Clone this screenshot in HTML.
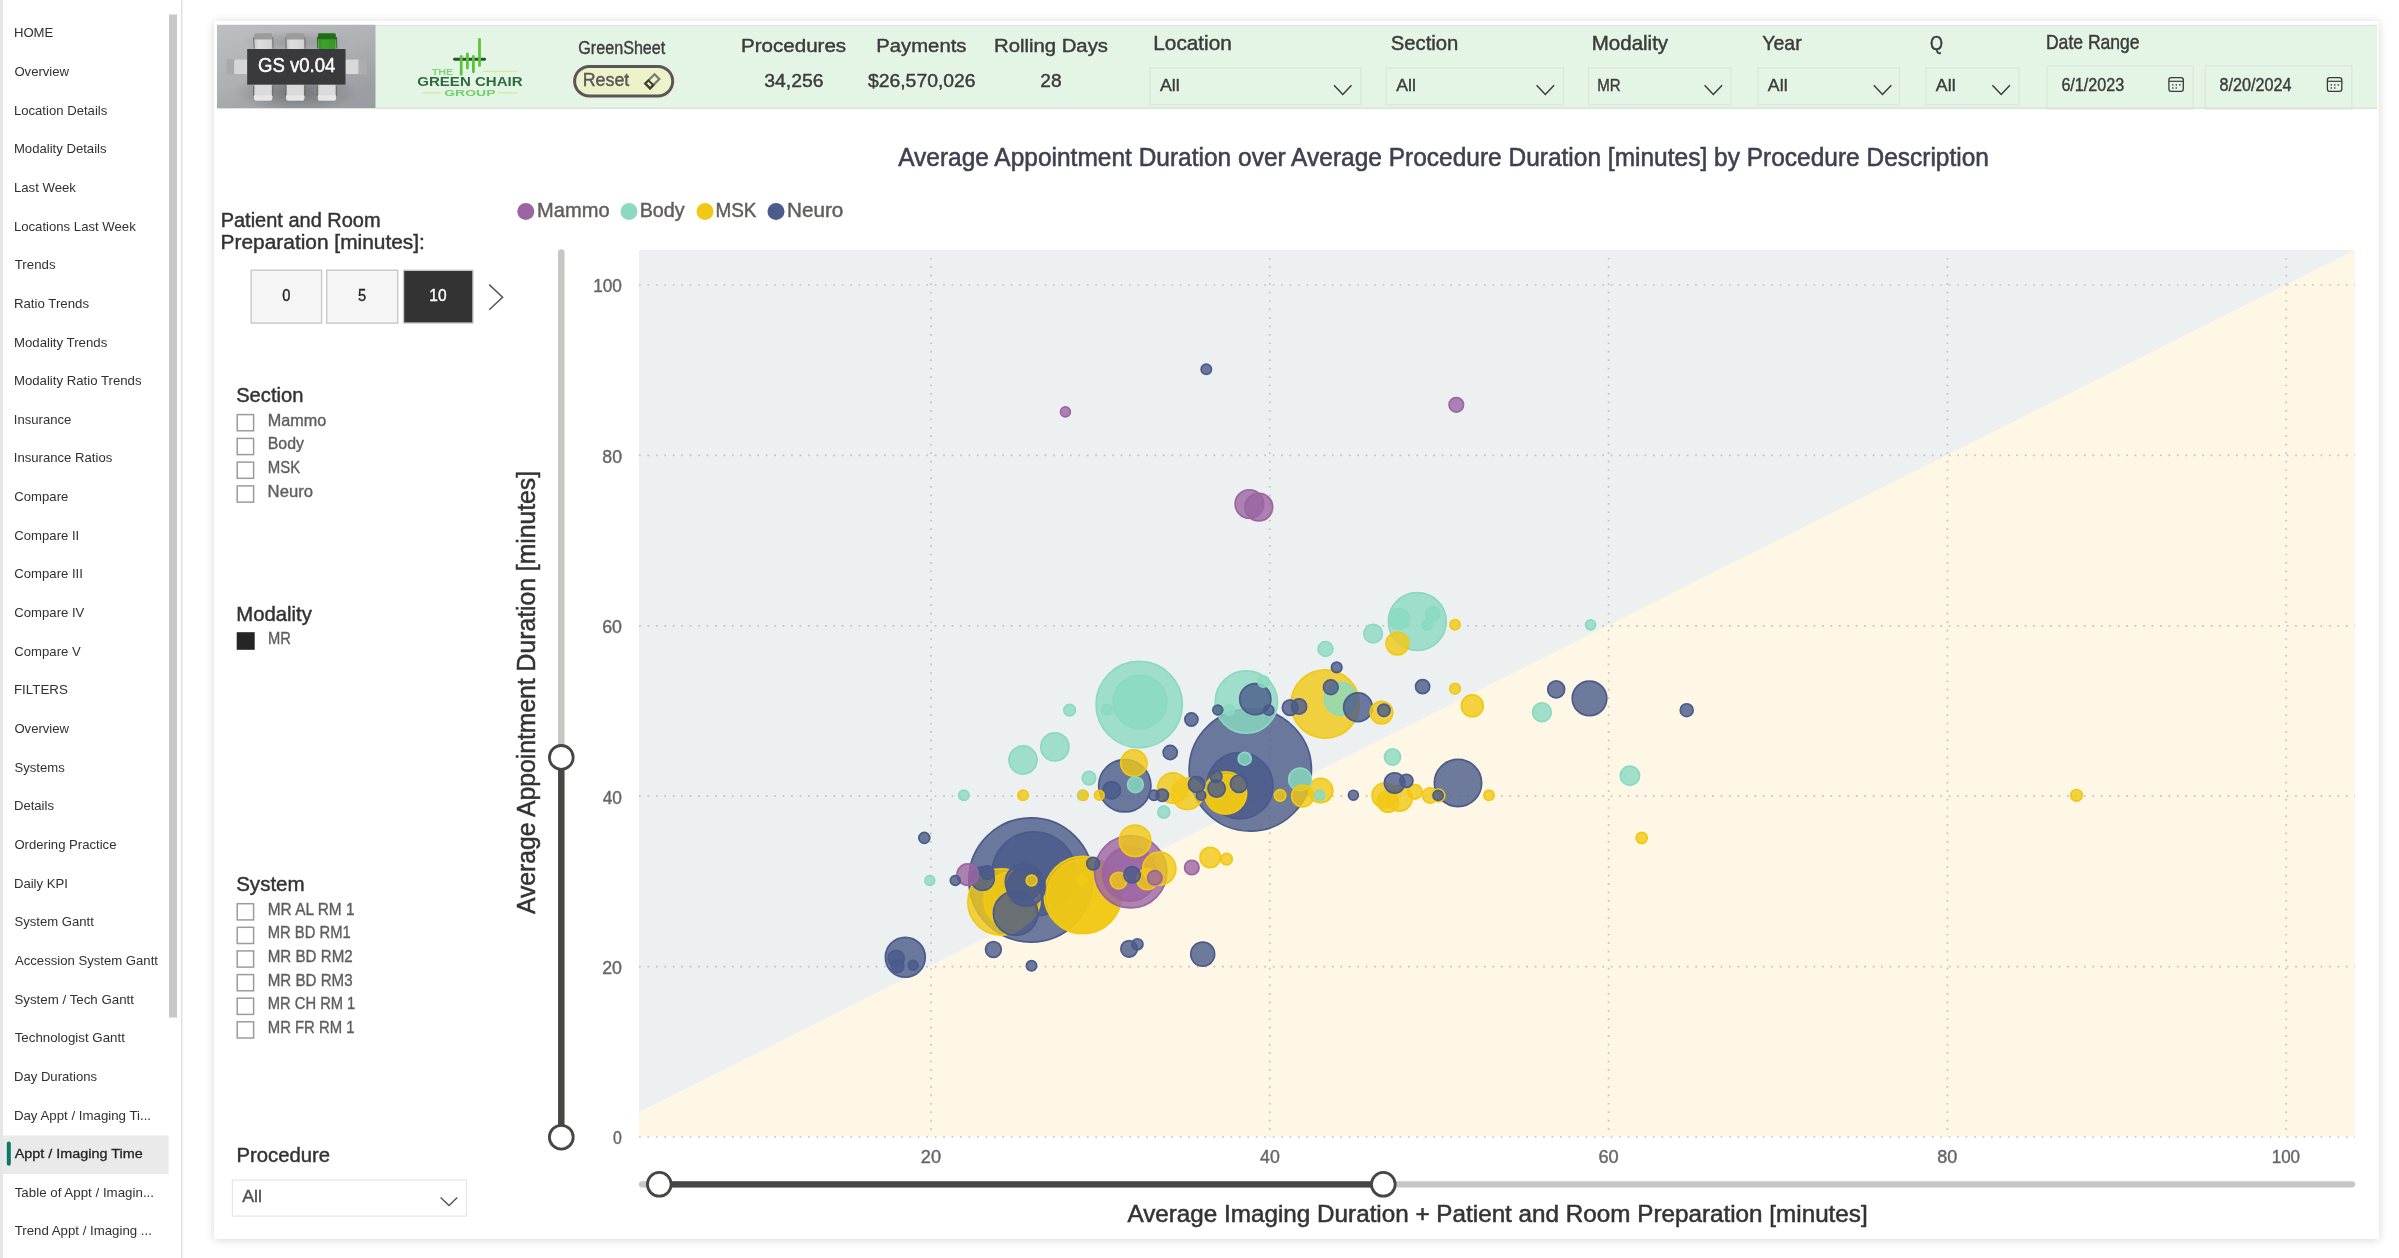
<!DOCTYPE html><html><head><meta charset="utf-8"><title>Appt / Imaging Time</title><style>html,body{margin:0;padding:0;background:#fff;overflow:hidden;width:2399px;height:1258px}#card{position:absolute;left:214px;top:21px;width:2165px;height:1218px;background:#fff;box-shadow:0 1px 9px rgba(0,0,0,0.16)}svg{position:absolute;left:0;top:0;display:block;will-change:transform}text{font-family:"Liberation Sans",sans-serif}</style></head><body>
<div id="card"></div>
<svg width="2399" height="1258" viewBox="0 0 2399 1258">
<rect x="0.00" y="0.00" width="3.00" height="1258.00" fill="#E6E6E6"/>
<rect x="181.00" y="0.00" width="1.50" height="1258.00" fill="#E1E1E1"/>
<rect x="169.00" y="14.50" width="8.00" height="1003.00" fill="#C8C8C8"/>
<rect x="3.00" y="1135.40" width="165.60" height="38.60" fill="#EAEAEA"/>
<rect x="6.80" y="1141.50" width="4.00" height="24.20" fill="#117865" rx="2"/>
<text x="13.92" y="37.30" font-size="13.60" fill="#323130" textLength="39.37" lengthAdjust="spacingAndGlyphs">HOME</text>
<text x="14.38" y="75.95" font-size="13.60" fill="#323130" textLength="54.69" lengthAdjust="spacingAndGlyphs">Overview</text>
<text x="13.92" y="114.60" font-size="13.60" fill="#323130" textLength="93.38" lengthAdjust="spacingAndGlyphs">Location Details</text>
<text x="13.92" y="153.25" font-size="13.60" fill="#323130" textLength="92.63" lengthAdjust="spacingAndGlyphs">Modality Details</text>
<text x="13.92" y="191.90" font-size="13.60" fill="#323130" textLength="62.00" lengthAdjust="spacingAndGlyphs">Last Week</text>
<text x="13.92" y="230.55" font-size="13.60" fill="#323130" textLength="121.83" lengthAdjust="spacingAndGlyphs">Locations Last Week</text>
<text x="14.71" y="269.20" font-size="13.60" fill="#323130" textLength="40.85" lengthAdjust="spacingAndGlyphs">Trends</text>
<text x="13.92" y="307.85" font-size="13.60" fill="#323130" textLength="75.13" lengthAdjust="spacingAndGlyphs">Ratio Trends</text>
<text x="13.92" y="346.50" font-size="13.60" fill="#323130" textLength="93.36" lengthAdjust="spacingAndGlyphs">Modality Trends</text>
<text x="13.92" y="385.15" font-size="13.60" fill="#323130" textLength="127.64" lengthAdjust="spacingAndGlyphs">Modality Ratio Trends</text>
<text x="13.79" y="423.80" font-size="13.60" fill="#323130" textLength="57.64" lengthAdjust="spacingAndGlyphs">Insurance</text>
<text x="13.79" y="462.45" font-size="13.60" fill="#323130" textLength="98.48" lengthAdjust="spacingAndGlyphs">Insurance Ratios</text>
<text x="14.33" y="501.10" font-size="13.60" fill="#323130" textLength="53.98" lengthAdjust="spacingAndGlyphs">Compare</text>
<text x="14.33" y="539.75" font-size="13.60" fill="#323130" textLength="64.92" lengthAdjust="spacingAndGlyphs">Compare II</text>
<text x="14.33" y="578.40" font-size="13.60" fill="#323130" textLength="68.56" lengthAdjust="spacingAndGlyphs">Compare III</text>
<text x="14.33" y="617.05" font-size="13.60" fill="#323130" textLength="70.02" lengthAdjust="spacingAndGlyphs">Compare IV</text>
<text x="14.33" y="655.70" font-size="13.60" fill="#323130" textLength="66.38" lengthAdjust="spacingAndGlyphs">Compare V</text>
<text x="13.92" y="694.35" font-size="13.60" fill="#323130" textLength="53.96" lengthAdjust="spacingAndGlyphs">FILTERS</text>
<text x="14.38" y="733.00" font-size="13.60" fill="#323130" textLength="54.69" lengthAdjust="spacingAndGlyphs">Overview</text>
<text x="14.40" y="771.65" font-size="13.60" fill="#323130" textLength="50.32" lengthAdjust="spacingAndGlyphs">Systems</text>
<text x="13.92" y="810.30" font-size="13.60" fill="#323130" textLength="40.12" lengthAdjust="spacingAndGlyphs">Details</text>
<text x="14.38" y="848.95" font-size="13.60" fill="#323130" textLength="102.11" lengthAdjust="spacingAndGlyphs">Ordering Practice</text>
<text x="13.92" y="887.60" font-size="13.60" fill="#323130" textLength="53.97" lengthAdjust="spacingAndGlyphs">Daily KPI</text>
<text x="14.40" y="926.25" font-size="13.60" fill="#323130" textLength="79.50" lengthAdjust="spacingAndGlyphs">System Gantt</text>
<text x="14.97" y="964.90" font-size="13.60" fill="#323130" textLength="142.96" lengthAdjust="spacingAndGlyphs">Accession System Gantt</text>
<text x="14.40" y="1003.55" font-size="13.60" fill="#323130" textLength="119.62" lengthAdjust="spacingAndGlyphs">System / Tech Gantt</text>
<text x="14.71" y="1042.20" font-size="13.60" fill="#323130" textLength="110.16" lengthAdjust="spacingAndGlyphs">Technologist Gantt</text>
<text x="13.92" y="1080.85" font-size="13.60" fill="#323130" textLength="83.15" lengthAdjust="spacingAndGlyphs">Day Durations</text>
<text x="13.92" y="1119.50" font-size="13.60" fill="#323130" textLength="137.13" lengthAdjust="spacingAndGlyphs">Day Appt / Imaging Ti...</text>
<text x="14.77" y="1158.15" font-size="13.60" fill="#252423" textLength="127.86" lengthAdjust="spacingAndGlyphs" stroke="#252423" stroke-width="0.3">Appt / Imaging Time</text>
<text x="14.71" y="1196.80" font-size="13.60" fill="#323130" textLength="139.33" lengthAdjust="spacingAndGlyphs">Table of Appt / Imagin...</text>
<text x="14.71" y="1235.45" font-size="13.60" fill="#323130" textLength="137.14" lengthAdjust="spacingAndGlyphs">Trend Appt / Imaging ...</text>
<rect x="217.00" y="25.00" width="2160.50" height="83.00" fill="#E5F5E5"/>
<rect x="217.00" y="25.00" width="2160.50" height="1.00" fill="#DDE6DD"/>
<rect x="217.00" y="107.50" width="2160.50" height="1.30" fill="#D8DCD8"/>
<defs><linearGradient id="imgbg" x1="0" y1="0" x2="0.6" y2="1"><stop offset="0" stop-color="#BDBFC2"/><stop offset="0.55" stop-color="#AEB0B4"/><stop offset="1" stop-color="#9A9DA1"/></linearGradient><radialGradient id="shad" cx="0.5" cy="0.5" r="0.5"><stop offset="0" stop-color="#5E6166" stop-opacity="0.75"/><stop offset="1" stop-color="#5E6166" stop-opacity="0"/></radialGradient><linearGradient id="seatT" x1="0" y1="0" x2="1" y2="0"><stop offset="0" stop-color="#C9C9C9"/><stop offset="0.25" stop-color="#DEDEDE"/><stop offset="1" stop-color="#D2D2D2"/></linearGradient><linearGradient id="seatG" x1="0" y1="0" x2="1" y2="0"><stop offset="0" stop-color="#2F8E22"/><stop offset="0.3" stop-color="#3DA42B"/><stop offset="1" stop-color="#349725"/></linearGradient><clipPath id="imgclip"><rect x="217" y="24.5" width="158.7" height="83.5"/></clipPath></defs>
<g clip-path="url(#imgclip)">
<rect x="217.00" y="24.50" width="158.70" height="83.50" fill="url(#imgbg)"/>
<ellipse cx="296" cy="92" rx="62" ry="20" fill="url(#shad)"/>
<ellipse cx="296" cy="42" rx="55" ry="12" fill="url(#shad)" opacity="0.45"/>
<path d="M253.9 39.8 L254.4 34.6 Q254.6 33.2 255.6 33.2 L270.8 33.2 Q271.8 33.2 272.0 34.6 L272.5 39.8 Z" fill="#9B9B9B"/>
<path d="M254.6 39.6 L255.2 49 L271.8 49 L272.0 39.6 Z" fill="url(#seatT)"/>
<line x1="253.6" y1="37" x2="254.0" y2="48.5" stroke="#707070" stroke-width="0.9"/>
<line x1="272.8" y1="37" x2="273.1" y2="48.5" stroke="#707070" stroke-width="0.9"/>
<path d="M254.6 84.6 L254.6 95 Q253.6 100.6 255.6 100.6 L270.8 100.6 Q272.8 100.6 271.8 95 L271.8 84.6 Z" fill="#DADADA"/>
<path d="M254.0 95.2 L272.4 95.2 Q272.6 100.6 270.6 100.6 L255.8 100.6 Q253.8 100.6 254.0 95.2 Z" fill="#E6E6E6"/>
<line x1="253.5" y1="86" x2="253.5" y2="96" stroke="#6A6A6A" stroke-width="0.9"/>
<line x1="272.9" y1="86" x2="272.9" y2="96" stroke="#6A6A6A" stroke-width="0.9"/>
<path d="M286.0 39.8 L286.5 34.6 Q286.7 33.2 287.7 33.2 L302.9 33.2 Q303.9 33.2 304.1 34.6 L304.6 39.8 Z" fill="#9B9B9B"/>
<path d="M286.7 39.6 L287.3 49 L303.9 49 L304.1 39.6 Z" fill="url(#seatT)"/>
<line x1="285.7" y1="37" x2="286.1" y2="48.5" stroke="#707070" stroke-width="0.9"/>
<line x1="304.9" y1="37" x2="305.2" y2="48.5" stroke="#707070" stroke-width="0.9"/>
<path d="M286.7 84.6 L286.7 95 Q285.7 100.6 287.7 100.6 L302.9 100.6 Q304.9 100.6 303.9 95 L303.9 84.6 Z" fill="#DADADA"/>
<path d="M286.1 95.2 L304.5 95.2 Q304.7 100.6 302.7 100.6 L287.9 100.6 Q285.9 100.6 286.1 95.2 Z" fill="#E6E6E6"/>
<line x1="285.6" y1="86" x2="285.6" y2="96" stroke="#6A6A6A" stroke-width="0.9"/>
<line x1="305.0" y1="86" x2="305.0" y2="96" stroke="#6A6A6A" stroke-width="0.9"/>
<path d="M317.6 39.8 L318.1 34.6 Q318.3 33.2 319.3 33.2 L334.5 33.2 Q335.5 33.2 335.7 34.6 L336.2 39.8 Z" fill="#1F6D17"/>
<path d="M318.3 39.6 L318.9 49 L335.5 49 L335.7 39.6 Z" fill="url(#seatG)"/>
<line x1="317.3" y1="37" x2="317.7" y2="48.5" stroke="#2A5A22" stroke-width="0.9"/>
<line x1="336.5" y1="37" x2="336.8" y2="48.5" stroke="#2A5A22" stroke-width="0.9"/>
<path d="M318.3 84.6 L318.3 95 Q317.3 100.6 319.3 100.6 L334.5 100.6 Q336.5 100.6 335.5 95 L335.5 84.6 Z" fill="#DADADA"/>
<path d="M317.7 95.2 L336.1 95.2 Q336.3 100.6 334.3 100.6 L319.5 100.6 Q317.5 100.6 317.7 95.2 Z" fill="#E6E6E6"/>
<line x1="317.2" y1="86" x2="317.2" y2="96" stroke="#6A6A6A" stroke-width="0.9"/>
<line x1="336.6" y1="86" x2="336.6" y2="96" stroke="#6A6A6A" stroke-width="0.9"/>
<rect x="226.5" y="59.2" width="8" height="15" rx="1.2" fill="#A9A9A9"/><rect x="234.2" y="59.6" width="13" height="14.4" fill="#D6D6D6"/>
<rect x="345.5" y="59.6" width="13.3" height="14.4" fill="#D8D8D8"/><rect x="358.5" y="59.2" width="8.3" height="15" rx="1.2" fill="#ADADAD"/>
<rect x="247.20" y="49.00" width="98.30" height="35.60" fill="#3A393B"/>
</g>
<text x="257.97" y="71.80" font-size="20.79" fill="#FFFFFF" textLength="77.38" lengthAdjust="spacingAndGlyphs" stroke="#FFFFFF" stroke-width="0.46">GS v0.04</text>
<g stroke-linecap="round">
<line x1="454.5" y1="59.3" x2="484.6" y2="59.3" stroke="#1E5A2E" stroke-width="2.9"/>
<line x1="461.2" y1="56.5" x2="461.2" y2="74.3" stroke="#5CC43A" stroke-width="2.8"/>
<line x1="467.4" y1="54.0" x2="467.4" y2="68.0" stroke="#5CC43A" stroke-width="2.8"/>
<line x1="473.4" y1="56.5" x2="473.4" y2="71.8" stroke="#5CC43A" stroke-width="2.8"/>
<line x1="479.5" y1="39.4" x2="479.5" y2="65.4" stroke="#5CC43A" stroke-width="2.8"/>
</g>
<text x="431.68" y="74.90" font-size="8.29" fill="#7FD67A" textLength="21.54" lengthAdjust="spacingAndGlyphs" font-weight="bold">THE</text>
<rect x="482.60" y="70.60" width="34.40" height="1.50" fill="#CFEFA8"/>
<text x="417.18" y="86.30" font-size="12.35" fill="#2D6A3C" textLength="105.53" lengthAdjust="spacingAndGlyphs" font-weight="bold">GREEN CHAIR</text>
<text x="444.23" y="95.60" font-size="9.30" fill="#6FD06C" textLength="51.25" lengthAdjust="spacingAndGlyphs" font-weight="bold">GROUP</text>
<rect x="422.00" y="92.20" width="19.30" height="1.40" fill="#CFEFA8"/>
<rect x="498.00" y="92.20" width="19.30" height="1.40" fill="#CFEFA8"/>
<text x="578.29" y="53.90" font-size="17.44" fill="#3E3E3E" textLength="87.03" lengthAdjust="spacingAndGlyphs" stroke="#3E3E3E" stroke-width="0.38">GreenSheet</text>
<rect x="574.6" y="66.4" width="98.1" height="29.5" rx="14.75" fill="#EEF2CB" stroke="#5A5657" stroke-width="3"/>
<text x="582.74" y="86.00" font-size="18.60" fill="#5A5657" textLength="46.59" lengthAdjust="spacingAndGlyphs" stroke="#5A5657" stroke-width="0.41">Reset</text>
<g transform="translate(652.3 81.35) rotate(-45)"><rect x="-6.6" y="-3.4" width="13.2" height="6.8" fill="none" stroke="#7A7C66" stroke-width="2.2"/><rect x="-6.6" y="-3.4" width="4.6" height="6.8" fill="none" stroke="#3D3F2F" stroke-width="2.1"/></g>
<text x="741.01" y="51.60" font-size="18.90" fill="#3B3B3B" textLength="105.13" lengthAdjust="spacingAndGlyphs" stroke="#3B3B3B" stroke-width="0.42">Procedures</text>
<text x="876.34" y="51.60" font-size="18.90" fill="#3B3B3B" textLength="90.09" lengthAdjust="spacingAndGlyphs" stroke="#3B3B3B" stroke-width="0.42">Payments</text>
<text x="994.14" y="51.60" font-size="18.90" fill="#3B3B3B" textLength="113.80" lengthAdjust="spacingAndGlyphs" stroke="#3B3B3B" stroke-width="0.42">Rolling Days</text>
<text x="764.26" y="87.30" font-size="18.90" fill="#3B3B3B" textLength="59.29" lengthAdjust="spacingAndGlyphs" stroke="#3B3B3B" stroke-width="0.42">34,256</text>
<text x="867.99" y="87.30" font-size="18.90" fill="#3B3B3B" textLength="107.56" lengthAdjust="spacingAndGlyphs" stroke="#3B3B3B" stroke-width="0.42">$26,570,026</text>
<text x="1040.34" y="87.30" font-size="18.90" fill="#3B3B3B" textLength="21.29" lengthAdjust="spacingAndGlyphs" stroke="#3B3B3B" stroke-width="0.42">28</text>
<text x="1153.30" y="50.20" font-size="20.64" fill="#3B3B3B" textLength="78.55" lengthAdjust="spacingAndGlyphs" stroke="#3B3B3B" stroke-width="0.45">Location</text>
<rect x="1150.0" y="68" width="211.0" height="36.8" fill="none" stroke="#DDE5DD" stroke-width="1.2"/>
<text x="1159.97" y="90.50" font-size="15.99" fill="#3B3B3B" textLength="19.72" lengthAdjust="spacingAndGlyphs" stroke="#3B3B3B" stroke-width="0.35">All</text>
<polyline points="1334.0,85.2 1342.8,94.5 1351.5,85.2" fill="none" stroke="#3B3B3B" stroke-width="1.5"/>
<text x="1390.78" y="50.20" font-size="20.64" fill="#3B3B3B" textLength="67.64" lengthAdjust="spacingAndGlyphs" stroke="#3B3B3B" stroke-width="0.45">Section</text>
<rect x="1386.2" y="68" width="177.3" height="36.8" fill="none" stroke="#DDE5DD" stroke-width="1.2"/>
<text x="1396.17" y="90.50" font-size="15.99" fill="#3B3B3B" textLength="19.72" lengthAdjust="spacingAndGlyphs" stroke="#3B3B3B" stroke-width="0.35">All</text>
<polyline points="1536.6,85.2 1545.3,94.5 1554.1,85.2" fill="none" stroke="#3B3B3B" stroke-width="1.5"/>
<text x="1591.72" y="50.20" font-size="20.64" fill="#3B3B3B" textLength="76.42" lengthAdjust="spacingAndGlyphs" stroke="#3B3B3B" stroke-width="0.45">Modality</text>
<rect x="1588.5" y="68" width="142.5" height="36.8" fill="none" stroke="#DDE5DD" stroke-width="1.2"/>
<text x="1597.26" y="90.50" font-size="15.99" fill="#3B3B3B" textLength="23.44" lengthAdjust="spacingAndGlyphs" stroke="#3B3B3B" stroke-width="0.35">MR</text>
<polyline points="1704.6,85.2 1713.3,94.5 1722.1,85.2" fill="none" stroke="#3B3B3B" stroke-width="1.5"/>
<text x="1762.29" y="50.20" font-size="20.64" fill="#3B3B3B" textLength="39.42" lengthAdjust="spacingAndGlyphs" stroke="#3B3B3B" stroke-width="0.45">Year</text>
<rect x="1757.9" y="68" width="141.6" height="36.8" fill="none" stroke="#DDE5DD" stroke-width="1.2"/>
<text x="1767.87" y="90.50" font-size="15.99" fill="#3B3B3B" textLength="19.72" lengthAdjust="spacingAndGlyphs" stroke="#3B3B3B" stroke-width="0.35">All</text>
<polyline points="1873.8,85.2 1882.5,94.5 1891.3,85.2" fill="none" stroke="#3B3B3B" stroke-width="1.5"/>
<text x="1929.91" y="50.20" font-size="20.64" fill="#3B3B3B" textLength="12.99" lengthAdjust="spacingAndGlyphs" stroke="#3B3B3B" stroke-width="0.45">Q</text>
<rect x="1925.9" y="68" width="93.2" height="36.8" fill="none" stroke="#DDE5DD" stroke-width="1.2"/>
<text x="1935.87" y="90.50" font-size="15.99" fill="#3B3B3B" textLength="19.72" lengthAdjust="spacingAndGlyphs" stroke="#3B3B3B" stroke-width="0.35">All</text>
<polyline points="1992.4,85.2 2001.2,94.5 2009.9,85.2" fill="none" stroke="#3B3B3B" stroke-width="1.5"/>
<text x="2045.96" y="48.90" font-size="19.48" fill="#3B3B3B" textLength="93.62" lengthAdjust="spacingAndGlyphs" stroke="#3B3B3B" stroke-width="0.43">Date Range</text>
<rect x="2047.1" y="66" width="146.1" height="43" fill="none" stroke="#DDE5DD" stroke-width="1.2"/>
<text x="2061.38" y="91.10" font-size="18.17" fill="#3B3B3B" textLength="62.93" lengthAdjust="spacingAndGlyphs" stroke="#3B3B3B" stroke-width="0.40">6/1/2023</text>
<rect x="2168.9" y="77.7" width="14.4" height="13.6" rx="2.2" fill="none" stroke="#3B3B3B" stroke-width="1.3"/>
<line x1="2168.9" y1="81.3" x2="2183.3" y2="81.3" stroke="#3B3B3B" stroke-width="1.2"/>
<rect x="2172.10" y="84.20" width="1.40" height="1.40" fill="#3B3B3B"/>
<rect x="2172.10" y="87.30" width="1.40" height="1.40" fill="#3B3B3B"/>
<rect x="2175.60" y="84.20" width="1.40" height="1.40" fill="#3B3B3B"/>
<rect x="2175.60" y="87.30" width="1.40" height="1.40" fill="#3B3B3B"/>
<rect x="2179.10" y="84.20" width="1.40" height="1.40" fill="#3B3B3B"/>
<rect x="2205.2" y="66" width="146.7" height="43" fill="none" stroke="#DDE5DD" stroke-width="1.2"/>
<text x="2219.60" y="91.10" font-size="18.17" fill="#3B3B3B" textLength="71.88" lengthAdjust="spacingAndGlyphs" stroke="#3B3B3B" stroke-width="0.40">8/20/2024</text>
<rect x="2327.4" y="77.7" width="14.4" height="13.6" rx="2.2" fill="none" stroke="#3B3B3B" stroke-width="1.3"/>
<line x1="2327.4" y1="81.3" x2="2341.8" y2="81.3" stroke="#3B3B3B" stroke-width="1.2"/>
<rect x="2330.60" y="84.20" width="1.40" height="1.40" fill="#3B3B3B"/>
<rect x="2330.60" y="87.30" width="1.40" height="1.40" fill="#3B3B3B"/>
<rect x="2334.10" y="84.20" width="1.40" height="1.40" fill="#3B3B3B"/>
<rect x="2334.10" y="87.30" width="1.40" height="1.40" fill="#3B3B3B"/>
<rect x="2337.60" y="84.20" width="1.40" height="1.40" fill="#3B3B3B"/>
<text x="220.66" y="226.70" font-size="19.77" fill="#333333" textLength="159.96" lengthAdjust="spacingAndGlyphs" stroke="#333333" stroke-width="0.43">Patient and Room</text>
<text x="220.59" y="249.00" font-size="19.77" fill="#333333" textLength="204.32" lengthAdjust="spacingAndGlyphs" stroke="#333333" stroke-width="0.43">Preparation [minutes]:</text>
<rect x="251.1" y="270.2" width="70.5" height="52.9" fill="#F5F5F5" stroke="#C9C9C9" stroke-width="1.4"/>
<text x="282.26" y="300.70" font-size="16.72" fill="#252525" textLength="8.18" lengthAdjust="spacingAndGlyphs" stroke="#252525" stroke-width="0.37">0</text>
<rect x="326.7" y="270.2" width="71.0" height="52.9" fill="#F5F5F5" stroke="#C9C9C9" stroke-width="1.4"/>
<text x="358.12" y="300.70" font-size="16.72" fill="#252525" textLength="8.18" lengthAdjust="spacingAndGlyphs" stroke="#252525" stroke-width="0.37">5</text>
<rect x="403.5" y="270.2" width="69.5" height="52.9" fill="#333333" stroke="#CFCFCF" stroke-width="1.4"/>
<text x="429.32" y="300.70" font-size="16.72" fill="#FFFFFF" textLength="17.29" lengthAdjust="spacingAndGlyphs" stroke="#FFFFFF" stroke-width="0.37">10</text>
<polyline points="489.2,284.6 502.6,297.2 489.2,309.8" fill="none" stroke="#555555" stroke-width="1.5"/>
<text x="236.18" y="401.90" font-size="20.64" fill="#333333" textLength="67.22" lengthAdjust="spacingAndGlyphs" stroke="#333333" stroke-width="0.45">Section</text>
<rect x="237.2" y="414.6" width="16.4" height="16.2" fill="#FFFFFF" stroke="#9C9C9C" stroke-width="1.5"/>
<text x="267.67" y="425.70" font-size="16.28" fill="#5E5E5E" textLength="58.51" lengthAdjust="spacingAndGlyphs" stroke="#5E5E5E" stroke-width="0.36">Mammo</text>
<rect x="237.2" y="438.4" width="16.4" height="16.2" fill="#FFFFFF" stroke="#9C9C9C" stroke-width="1.5"/>
<text x="267.70" y="449.45" font-size="16.28" fill="#5E5E5E" textLength="36.24" lengthAdjust="spacingAndGlyphs" stroke="#5E5E5E" stroke-width="0.36">Body</text>
<rect x="237.2" y="462.1" width="16.4" height="16.2" fill="#FFFFFF" stroke="#9C9C9C" stroke-width="1.5"/>
<text x="267.77" y="473.20" font-size="16.28" fill="#5E5E5E" textLength="32.39" lengthAdjust="spacingAndGlyphs" stroke="#5E5E5E" stroke-width="0.36">MSK</text>
<rect x="237.2" y="485.9" width="16.4" height="16.2" fill="#FFFFFF" stroke="#9C9C9C" stroke-width="1.5"/>
<text x="267.63" y="496.95" font-size="16.28" fill="#5E5E5E" textLength="45.37" lengthAdjust="spacingAndGlyphs" stroke="#5E5E5E" stroke-width="0.36">Neuro</text>
<text x="236.23" y="620.80" font-size="20.93" fill="#333333" textLength="75.61" lengthAdjust="spacingAndGlyphs" stroke="#333333" stroke-width="0.46">Modality</text>
<rect x="236.70" y="632.20" width="18.00" height="17.60" fill="#252525"/>
<text x="267.89" y="643.90" font-size="15.99" fill="#5E5E5E" textLength="22.89" lengthAdjust="spacingAndGlyphs" stroke="#5E5E5E" stroke-width="0.35">MR</text>
<text x="236.17" y="890.80" font-size="20.64" fill="#333333" textLength="68.49" lengthAdjust="spacingAndGlyphs" stroke="#333333" stroke-width="0.45">System</text>
<rect x="237.2" y="903.7" width="16.4" height="16.2" fill="#FFFFFF" stroke="#9C9C9C" stroke-width="1.5"/>
<text x="267.76" y="914.80" font-size="16.42" fill="#5E5E5E" textLength="86.78" lengthAdjust="spacingAndGlyphs" stroke="#5E5E5E" stroke-width="0.36">MR AL RM 1</text>
<rect x="237.2" y="927.3" width="16.4" height="16.2" fill="#FFFFFF" stroke="#9C9C9C" stroke-width="1.5"/>
<text x="267.79" y="938.42" font-size="16.42" fill="#5E5E5E" textLength="82.93" lengthAdjust="spacingAndGlyphs" stroke="#5E5E5E" stroke-width="0.36">MR BD RM1</text>
<rect x="237.2" y="950.9" width="16.4" height="16.2" fill="#FFFFFF" stroke="#9C9C9C" stroke-width="1.5"/>
<text x="267.76" y="962.04" font-size="16.42" fill="#5E5E5E" textLength="84.90" lengthAdjust="spacingAndGlyphs" stroke="#5E5E5E" stroke-width="0.36">MR BD RM2</text>
<rect x="237.2" y="974.6" width="16.4" height="16.2" fill="#FFFFFF" stroke="#9C9C9C" stroke-width="1.5"/>
<text x="267.76" y="985.66" font-size="16.42" fill="#5E5E5E" textLength="84.80" lengthAdjust="spacingAndGlyphs" stroke="#5E5E5E" stroke-width="0.36">MR BD RM3</text>
<rect x="237.2" y="998.2" width="16.4" height="16.2" fill="#FFFFFF" stroke="#9C9C9C" stroke-width="1.5"/>
<text x="267.79" y="1009.28" font-size="16.42" fill="#5E5E5E" textLength="87.53" lengthAdjust="spacingAndGlyphs" stroke="#5E5E5E" stroke-width="0.36">MR CH RM 1</text>
<rect x="237.2" y="1021.8" width="16.4" height="16.2" fill="#FFFFFF" stroke="#9C9C9C" stroke-width="1.5"/>
<text x="267.78" y="1032.90" font-size="16.42" fill="#5E5E5E" textLength="86.75" lengthAdjust="spacingAndGlyphs" stroke="#5E5E5E" stroke-width="0.36">MR FR RM 1</text>
<text x="236.44" y="1161.70" font-size="20.93" fill="#333333" textLength="93.56" lengthAdjust="spacingAndGlyphs" stroke="#333333" stroke-width="0.46">Procedure</text>
<rect x="232.4" y="1180.1" width="234" height="36" fill="#FFFFFF" stroke="#E6E6E6" stroke-width="1.2"/>
<text x="242.16" y="1202.00" font-size="16.13" fill="#505050" textLength="19.93" lengthAdjust="spacingAndGlyphs" stroke="#505050" stroke-width="0.35">All</text>
<polyline points="440.6,1197.5 449,1205.6 457.3,1197.5" fill="none" stroke="#555555" stroke-width="1.4"/>
<text x="898.15" y="165.80" font-size="25.15" fill="#3F4150" textLength="1090.83" lengthAdjust="spacingAndGlyphs" stroke="#3F4150" stroke-width="0.55">Average Appointment Duration over Average Procedure Duration [minutes] by Procedure Description</text>
<circle cx="525.80" cy="211.40" r="8.50" fill="#9B64A2"/>
<text x="537.10" y="217.00" font-size="19.99" fill="#605E5C" textLength="72.49" lengthAdjust="spacingAndGlyphs" stroke="#605E5C" stroke-width="0.44">Mammo</text>
<circle cx="629.00" cy="211.40" r="8.50" fill="#8AD9C0"/>
<text x="639.63" y="217.00" font-size="19.99" fill="#605E5C" textLength="44.90" lengthAdjust="spacingAndGlyphs" stroke="#605E5C" stroke-width="0.44">Body</text>
<circle cx="705.00" cy="211.40" r="8.50" fill="#F1C814"/>
<text x="715.45" y="217.00" font-size="19.99" fill="#605E5C" textLength="41.02" lengthAdjust="spacingAndGlyphs" stroke="#605E5C" stroke-width="0.44">MSK</text>
<circle cx="776.00" cy="211.40" r="8.50" fill="#4B5B8C"/>
<text x="787.05" y="217.00" font-size="19.99" fill="#605E5C" textLength="56.31" lengthAdjust="spacingAndGlyphs" stroke="#605E5C" stroke-width="0.44">Neuro</text>
<rect x="639.00" y="250.00" width="1716.00" height="886.50" fill="#FEF7E5"/>
<polygon points="639.0,250.0 2355.0,250.0 639.0,1112.2" fill="#EDF0F1"/>
<line x1="639.0" y1="1137.00" x2="2355.0" y2="1137.00" stroke="#C2C2C2" stroke-width="1.7" stroke-dasharray="1.7,6.75"/>
<line x1="639.0" y1="966.60" x2="2355.0" y2="966.60" stroke="#C2C2C2" stroke-width="1.7" stroke-dasharray="1.7,6.75"/>
<line x1="639.0" y1="796.20" x2="2355.0" y2="796.20" stroke="#C2C2C2" stroke-width="1.7" stroke-dasharray="1.7,6.75"/>
<line x1="639.0" y1="625.80" x2="2355.0" y2="625.80" stroke="#C2C2C2" stroke-width="1.7" stroke-dasharray="1.7,6.75"/>
<line x1="639.0" y1="455.40" x2="2355.0" y2="455.40" stroke="#C2C2C2" stroke-width="1.7" stroke-dasharray="1.7,6.75"/>
<line x1="639.0" y1="285.00" x2="2355.0" y2="285.00" stroke="#C2C2C2" stroke-width="1.7" stroke-dasharray="1.7,6.75"/>
<line x1="931.00" y1="257.9" x2="931.00" y2="1137.0" stroke="#C2C2C2" stroke-width="1.7" stroke-dasharray="1.7,6.75"/>
<line x1="1269.80" y1="257.9" x2="1269.80" y2="1137.0" stroke="#C2C2C2" stroke-width="1.7" stroke-dasharray="1.7,6.75"/>
<line x1="1608.60" y1="257.9" x2="1608.60" y2="1137.0" stroke="#C2C2C2" stroke-width="1.7" stroke-dasharray="1.7,6.75"/>
<line x1="1947.40" y1="257.9" x2="1947.40" y2="1137.0" stroke="#C2C2C2" stroke-width="1.7" stroke-dasharray="1.7,6.75"/>
<line x1="2286.20" y1="257.9" x2="2286.20" y2="1137.0" stroke="#C2C2C2" stroke-width="1.7" stroke-dasharray="1.7,6.75"/>
<text x="613.08" y="1144.30" font-size="18.90" fill="#666666" textLength="8.84" lengthAdjust="spacingAndGlyphs" stroke="#666666" stroke-width="0.42">0</text>
<text x="602.21" y="973.90" font-size="18.90" fill="#666666" textLength="19.79" lengthAdjust="spacingAndGlyphs" stroke="#666666" stroke-width="0.42">20</text>
<text x="602.70" y="803.50" font-size="18.90" fill="#666666" textLength="19.27" lengthAdjust="spacingAndGlyphs" stroke="#666666" stroke-width="0.42">40</text>
<text x="602.20" y="633.10" font-size="18.90" fill="#666666" textLength="19.80" lengthAdjust="spacingAndGlyphs" stroke="#666666" stroke-width="0.42">60</text>
<text x="602.33" y="462.70" font-size="18.90" fill="#666666" textLength="19.66" lengthAdjust="spacingAndGlyphs" stroke="#666666" stroke-width="0.42">80</text>
<text x="593.19" y="292.30" font-size="18.90" fill="#666666" textLength="28.79" lengthAdjust="spacingAndGlyphs" stroke="#666666" stroke-width="0.42">100</text>
<text x="920.79" y="1163.20" font-size="18.31" fill="#666666" textLength="20.22" lengthAdjust="spacingAndGlyphs" stroke="#666666" stroke-width="0.40">20</text>
<text x="1260.09" y="1163.20" font-size="18.31" fill="#666666" textLength="19.70" lengthAdjust="spacingAndGlyphs" stroke="#666666" stroke-width="0.40">40</text>
<text x="1598.38" y="1163.20" font-size="18.31" fill="#666666" textLength="20.23" lengthAdjust="spacingAndGlyphs" stroke="#666666" stroke-width="0.40">60</text>
<text x="1937.32" y="1163.20" font-size="18.31" fill="#666666" textLength="20.09" lengthAdjust="spacingAndGlyphs" stroke="#666666" stroke-width="0.40">80</text>
<text x="2271.71" y="1163.20" font-size="18.31" fill="#666666" textLength="28.36" lengthAdjust="spacingAndGlyphs" stroke="#666666" stroke-width="0.40">100</text>
<g fill-opacity="0.8" stroke-width="1.7">
<circle cx="1031.0" cy="880.0" r="62.15" fill="#4A5A8A" stroke="#4A5A8A"/>
<circle cx="1250.3" cy="770.0" r="61.15" fill="#4A5A8A" stroke="#4A5A8A"/>
<circle cx="1065.0" cy="880.5" r="5.15" fill="#F1C814" stroke="#F1C814"/>
<circle cx="1082.3" cy="879.9" r="5.15" fill="#F1C814" stroke="#F1C814"/>
<circle cx="1139.2" cy="704.5" r="43.15" fill="#8AD9C0" stroke="#8AD9C0"/>
<circle cx="1034.0" cy="874.0" r="42.15" fill="#4A5A8A" stroke="#4A5A8A"/>
<circle cx="1082.8" cy="895.0" r="38.65" fill="#F1C814" stroke="#F1C814"/>
<circle cx="1084.0" cy="896.0" r="37.15" fill="#F1C814" stroke="#F1C814"/>
<circle cx="1130.7" cy="871.8" r="36.15" fill="#9B64A2" stroke="#9B64A2"/>
<circle cx="1325.2" cy="704.0" r="34.15" fill="#F1C814" stroke="#F1C814"/>
<circle cx="1001.0" cy="902.0" r="33.15" fill="#F1C814" stroke="#F1C814"/>
<circle cx="1239.8" cy="785.8" r="33.15" fill="#4A5A8A" stroke="#4A5A8A"/>
<circle cx="1246.3" cy="702.0" r="31.15" fill="#8AD9C0" stroke="#8AD9C0"/>
<circle cx="1417.3" cy="621.5" r="28.95" fill="#8AD9C0" stroke="#8AD9C0"/>
<circle cx="1012.0" cy="900.0" r="28.15" fill="#F1C814" stroke="#F1C814"/>
<circle cx="1129.8" cy="874.0" r="27.15" fill="#9B64A2" stroke="#9B64A2"/>
<circle cx="1140.0" cy="702.0" r="26.75" fill="#8AD9C0" stroke="#8AD9C0"/>
<circle cx="1124.8" cy="785.8" r="26.15" fill="#4A5A8A" stroke="#4A5A8A"/>
<circle cx="1458.0" cy="783.0" r="23.65" fill="#4A5A8A" stroke="#4A5A8A"/>
<circle cx="1015.6" cy="913.3" r="22.15" fill="#4A5A8A" stroke="#4A5A8A"/>
<circle cx="1225.5" cy="792.9" r="21.15" fill="#F1C814" stroke="#F1C814"/>
<circle cx="905.3" cy="957.3" r="19.95" fill="#4A5A8A" stroke="#4A5A8A"/>
<circle cx="1026.0" cy="887.0" r="19.15" fill="#4A5A8A" stroke="#4A5A8A"/>
<circle cx="1226.5" cy="794.0" r="19.15" fill="#F1C814" stroke="#F1C814"/>
<circle cx="1024.0" cy="882.0" r="18.65" fill="#4A5A8A" stroke="#4A5A8A"/>
<circle cx="1589.5" cy="698.4" r="17.25" fill="#4A5A8A" stroke="#4A5A8A"/>
<circle cx="1159.3" cy="868.7" r="16.55" fill="#F1C814" stroke="#F1C814"/>
<circle cx="1340.7" cy="698.8" r="16.25" fill="#8AD9C0" stroke="#8AD9C0"/>
<circle cx="1135.1" cy="840.8" r="15.75" fill="#F1C814" stroke="#F1C814"/>
<circle cx="1187.3" cy="793.8" r="15.75" fill="#F1C814" stroke="#F1C814"/>
<circle cx="1255.3" cy="699.2" r="15.55" fill="#4A5A8A" stroke="#4A5A8A"/>
<circle cx="1172.9" cy="788.0" r="15.15" fill="#F1C814" stroke="#F1C814"/>
<circle cx="1358.0" cy="707.2" r="14.35" fill="#4A5A8A" stroke="#4A5A8A"/>
<circle cx="1249.4" cy="504.0" r="14.25" fill="#9B64A2" stroke="#9B64A2"/>
<circle cx="1023.0" cy="760.0" r="14.05" fill="#8AD9C0" stroke="#8AD9C0"/>
<circle cx="1054.9" cy="746.9" r="14.05" fill="#8AD9C0" stroke="#8AD9C0"/>
<circle cx="1258.8" cy="507.1" r="13.85" fill="#9B64A2" stroke="#9B64A2"/>
<circle cx="1133.9" cy="763.1" r="13.15" fill="#F1C814" stroke="#F1C814"/>
<circle cx="1399.4" cy="798.3" r="12.75" fill="#F1C814" stroke="#F1C814"/>
<circle cx="1384.4" cy="795.5" r="12.35" fill="#F1C814" stroke="#F1C814"/>
<circle cx="1320.7" cy="790.6" r="12.15" fill="#F1C814" stroke="#F1C814"/>
<circle cx="1202.7" cy="954.1" r="11.95" fill="#4A5A8A" stroke="#4A5A8A"/>
<circle cx="982.6" cy="878.6" r="11.65" fill="#4A5A8A" stroke="#4A5A8A"/>
<circle cx="1300.1" cy="779.4" r="11.35" fill="#8AD9C0" stroke="#8AD9C0"/>
<circle cx="1397.4" cy="643.6" r="11.35" fill="#F1C814" stroke="#F1C814"/>
<circle cx="1381.5" cy="712.6" r="11.25" fill="#F1C814" stroke="#F1C814"/>
<circle cx="1302.6" cy="796.0" r="10.95" fill="#F1C814" stroke="#F1C814"/>
<circle cx="1472.3" cy="705.8" r="10.95" fill="#F1C814" stroke="#F1C814"/>
<circle cx="967.6" cy="874.6" r="10.65" fill="#9B64A2" stroke="#9B64A2"/>
<circle cx="1388.0" cy="801.5" r="10.65" fill="#F1C814" stroke="#F1C814"/>
<circle cx="1147.2" cy="879.3" r="10.45" fill="#F1C814" stroke="#F1C814"/>
<circle cx="1210.2" cy="857.4" r="10.15" fill="#F1C814" stroke="#F1C814"/>
<circle cx="1399.4" cy="618.8" r="10.15" fill="#8AD9C0" stroke="#8AD9C0"/>
<circle cx="1394.6" cy="782.9" r="10.15" fill="#4A5A8A" stroke="#4A5A8A"/>
<circle cx="1629.9" cy="775.7" r="9.65" fill="#8AD9C0" stroke="#8AD9C0"/>
<circle cx="1541.9" cy="712.3" r="9.35" fill="#8AD9C0" stroke="#8AD9C0"/>
<circle cx="1373.1" cy="633.7" r="9.25" fill="#8AD9C0" stroke="#8AD9C0"/>
<circle cx="1111.7" cy="790.3" r="8.75" fill="#4A5A8A" stroke="#4A5A8A"/>
<circle cx="1216.6" cy="788.6" r="8.65" fill="#4A5A8A" stroke="#4A5A8A"/>
<circle cx="1239.0" cy="783.7" r="8.65" fill="#4A5A8A" stroke="#4A5A8A"/>
<circle cx="1556.2" cy="689.4" r="8.45" fill="#4A5A8A" stroke="#4A5A8A"/>
<circle cx="1118.6" cy="880.6" r="8.35" fill="#F1C814" stroke="#F1C814"/>
<circle cx="1129.1" cy="948.8" r="8.25" fill="#4A5A8A" stroke="#4A5A8A"/>
<circle cx="1132.1" cy="874.8" r="8.15" fill="#4A5A8A" stroke="#4A5A8A"/>
<circle cx="1196.6" cy="784.4" r="8.15" fill="#4A5A8A" stroke="#4A5A8A"/>
<circle cx="896.1" cy="958.4" r="8.05" fill="#4A5A8A" stroke="#4A5A8A"/>
<circle cx="1392.5" cy="757.0" r="8.05" fill="#8AD9C0" stroke="#8AD9C0"/>
<circle cx="993.4" cy="949.5" r="7.85" fill="#4A5A8A" stroke="#4A5A8A"/>
<circle cx="1135.4" cy="784.7" r="7.85" fill="#8AD9C0" stroke="#8AD9C0"/>
<circle cx="1290.1" cy="707.7" r="7.75" fill="#4A5A8A" stroke="#4A5A8A"/>
<circle cx="1430.2" cy="795.4" r="7.65" fill="#F1C814" stroke="#F1C814"/>
<circle cx="1299.1" cy="706.5" r="7.55" fill="#4A5A8A" stroke="#4A5A8A"/>
<circle cx="1325.5" cy="649.0" r="7.45" fill="#8AD9C0" stroke="#8AD9C0"/>
<circle cx="1330.8" cy="687.3" r="7.35" fill="#4A5A8A" stroke="#4A5A8A"/>
<circle cx="1456.3" cy="404.8" r="7.25" fill="#9B64A2" stroke="#9B64A2"/>
<circle cx="1191.8" cy="867.5" r="7.25" fill="#9B64A2" stroke="#9B64A2"/>
<circle cx="1414.9" cy="791.8" r="7.25" fill="#F1C814" stroke="#F1C814"/>
<circle cx="1154.8" cy="877.8" r="7.15" fill="#9B64A2" stroke="#9B64A2"/>
<circle cx="1432.7" cy="613.8" r="7.15" fill="#8AD9C0" stroke="#8AD9C0"/>
<circle cx="1170.2" cy="752.5" r="7.05" fill="#4A5A8A" stroke="#4A5A8A"/>
<circle cx="1422.6" cy="686.7" r="7.05" fill="#4A5A8A" stroke="#4A5A8A"/>
<circle cx="1089.0" cy="778.2" r="6.75" fill="#8AD9C0" stroke="#8AD9C0"/>
<circle cx="987.2" cy="872.6" r="6.65" fill="#4A5A8A" stroke="#4A5A8A"/>
<circle cx="1191.4" cy="719.5" r="6.55" fill="#4A5A8A" stroke="#4A5A8A"/>
<circle cx="1406.4" cy="780.8" r="6.55" fill="#4A5A8A" stroke="#4A5A8A"/>
<circle cx="1244.7" cy="758.7" r="6.45" fill="#8AD9C0" stroke="#8AD9C0"/>
<circle cx="1686.7" cy="710.2" r="6.45" fill="#4A5A8A" stroke="#4A5A8A"/>
<circle cx="1093.1" cy="863.6" r="6.35" fill="#4A5A8A" stroke="#4A5A8A"/>
<circle cx="897.5" cy="966.2" r="6.35" fill="#4A5A8A" stroke="#4A5A8A"/>
<circle cx="1438.4" cy="795.5" r="6.35" fill="#F1C814" stroke="#F1C814"/>
<circle cx="1162.3" cy="795.3" r="6.15" fill="#4A5A8A" stroke="#4A5A8A"/>
<circle cx="1383.9" cy="710.2" r="6.15" fill="#4A5A8A" stroke="#4A5A8A"/>
<circle cx="1163.8" cy="812.1" r="5.95" fill="#8AD9C0" stroke="#8AD9C0"/>
<circle cx="1216.1" cy="776.5" r="5.85" fill="#4A5A8A" stroke="#4A5A8A"/>
<circle cx="2076.5" cy="795.3" r="5.81" fill="#F1C814" stroke="#F1C814"/>
<circle cx="1069.6" cy="710.2" r="5.75" fill="#8AD9C0" stroke="#8AD9C0"/>
<circle cx="1226.5" cy="859.2" r="5.75" fill="#F1C814" stroke="#F1C814"/>
<circle cx="1280.1" cy="795.3" r="5.75" fill="#F1C814" stroke="#F1C814"/>
<circle cx="1137.4" cy="944.3" r="5.55" fill="#4A5A8A" stroke="#4A5A8A"/>
<circle cx="1263.5" cy="681.5" r="5.55" fill="#8AD9C0" stroke="#8AD9C0"/>
<circle cx="1641.7" cy="837.9" r="5.55" fill="#F1C814" stroke="#F1C814"/>
<circle cx="924.3" cy="837.9" r="5.45" fill="#4A5A8A" stroke="#4A5A8A"/>
<circle cx="1031.6" cy="880.5" r="5.35" fill="#F1C814" stroke="#F1C814"/>
<circle cx="1455.0" cy="688.7" r="5.35" fill="#F1C814" stroke="#F1C814"/>
<circle cx="1336.7" cy="667.4" r="5.25" fill="#4A5A8A" stroke="#4A5A8A"/>
<circle cx="1206.3" cy="369.2" r="5.15" fill="#4A5A8A" stroke="#4A5A8A"/>
<circle cx="963.8" cy="795.3" r="5.15" fill="#8AD9C0" stroke="#8AD9C0"/>
<circle cx="1023.0" cy="795.3" r="5.15" fill="#F1C814" stroke="#F1C814"/>
<circle cx="1082.6" cy="795.3" r="5.15" fill="#8AD9C0" stroke="#8AD9C0"/>
<circle cx="1031.5" cy="965.7" r="5.15" fill="#4A5A8A" stroke="#4A5A8A"/>
<circle cx="1107.2" cy="709.8" r="5.15" fill="#8AD9C0" stroke="#8AD9C0"/>
<circle cx="1154.0" cy="795.3" r="5.15" fill="#4A5A8A" stroke="#4A5A8A"/>
<circle cx="1229.4" cy="710.1" r="5.15" fill="#8AD9C0" stroke="#8AD9C0"/>
<circle cx="1319.6" cy="795.3" r="5.15" fill="#8AD9C0" stroke="#8AD9C0"/>
<circle cx="1427.2" cy="624.7" r="5.15" fill="#8AD9C0" stroke="#8AD9C0"/>
<circle cx="1455.0" cy="624.7" r="5.15" fill="#F1C814" stroke="#F1C814"/>
<circle cx="1489.0" cy="795.2" r="5.15" fill="#F1C814" stroke="#F1C814"/>
<circle cx="1268.8" cy="710.2" r="5.05" fill="#4A5A8A" stroke="#4A5A8A"/>
<circle cx="1438.1" cy="795.4" r="5.05" fill="#4A5A8A" stroke="#4A5A8A"/>
<circle cx="1590.6" cy="624.8" r="5.05" fill="#8AD9C0" stroke="#8AD9C0"/>
<circle cx="1065.4" cy="411.9" r="4.95" fill="#9B64A2" stroke="#9B64A2"/>
<circle cx="1083.3" cy="795.3" r="4.95" fill="#F1C814" stroke="#F1C814"/>
<circle cx="955.3" cy="880.5" r="4.95" fill="#4A5A8A" stroke="#4A5A8A"/>
<circle cx="913.1" cy="965.3" r="4.95" fill="#4A5A8A" stroke="#4A5A8A"/>
<circle cx="1217.8" cy="710.0" r="4.95" fill="#4A5A8A" stroke="#4A5A8A"/>
<circle cx="1353.4" cy="795.2" r="4.95" fill="#4A5A8A" stroke="#4A5A8A"/>
<circle cx="929.8" cy="880.5" r="4.85" fill="#8AD9C0" stroke="#8AD9C0"/>
<circle cx="1099.3" cy="795.3" r="4.85" fill="#F1C814" stroke="#F1C814"/>
<circle cx="1201.0" cy="795.4" r="4.65" fill="#4A5A8A" stroke="#4A5A8A"/>
</g>
<line x1="642" y1="1184.3" x2="2352" y2="1184.3" stroke="#C8C6C4" stroke-width="6.3" stroke-linecap="round"/>
<line x1="659.3" y1="1184.3" x2="1383.3" y2="1184.3" stroke="#484644" stroke-width="6.3"/>
<circle cx="659.30" cy="1184.30" r="11.90" fill="#FFFFFF" stroke="#484644" stroke-width="2.8"/>
<circle cx="1383.30" cy="1184.30" r="11.90" fill="#FFFFFF" stroke="#484644" stroke-width="2.8"/>
<line x1="561.3" y1="252.5" x2="561.3" y2="757.4" stroke="#C8C6C4" stroke-width="6.5" stroke-linecap="round"/>
<line x1="561.3" y1="757.4" x2="561.3" y2="1137.2" stroke="#484644" stroke-width="6.5"/>
<circle cx="561.30" cy="757.40" r="11.90" fill="#FFFFFF" stroke="#484644" stroke-width="2.8"/>
<circle cx="561.30" cy="1137.20" r="11.90" fill="#FFFFFF" stroke="#484644" stroke-width="2.8"/>
<text x="1127.45" y="1221.70" font-size="24.27" fill="#333333" textLength="740.28" lengthAdjust="spacingAndGlyphs" stroke="#333333" stroke-width="0.53">Average Imaging Duration + Patient and Room Preparation [minutes]</text>
<text transform="translate(534.6 914) rotate(-90)" x="-0.05" y="0" font-size="25.00" fill="#333333" stroke="#333333" stroke-width="0.5" textLength="443.10" lengthAdjust="spacingAndGlyphs">Average Appointment Duration [minutes]</text>
</svg></body></html>
